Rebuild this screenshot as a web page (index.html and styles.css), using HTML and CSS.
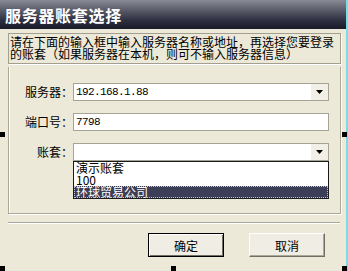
FILE: index.html
```html
<!DOCTYPE html>
<html lang="zh-CN">
<head>
<meta charset="utf-8">
<title>服务器账套选择</title>
<link rel="stylesheet" href="styles.css">
</head>
<body>
<div class="window">
  <div class="titlebar"><span class="title">服务器账套选择</span></div>
  <div class="content">
    <div class="info">请在下面的输入框中输入服务器名称或地址，再选择您要登录<br>的账套（如果服务器在本机，则可不输入服务器信息）</div>
    <div class="group">
      <div class="row">
        <label class="lbl">服务器：</label>
        <div class="combo"><span class="val">192.168.1.88</span><span class="drop"><svg width="7" height="4" viewBox="0 0 7 4"><polygon points="0,0 7,0 3.5,4" fill="#000"/></svg></span></div>
      </div>
      <div class="row">
        <label class="lbl">端口号：</label>
        <div class="field"><span class="val">7798</span></div>
      </div>
      <div class="row">
        <label class="lbl">账套：</label>
        <div class="combo"><span class="val"></span><span class="drop"><svg width="7" height="4" viewBox="0 0 7 4"><polygon points="0,0 7,0 3.5,4" fill="#000"/></svg></span>
          <ul class="list">
            <li>演示账套</li>
            <li>100</li>
            <li class="sel">环球贸易公司</li>
          </ul>
        </div>
      </div>
    </div>
    <div class="sep"></div>
    <div class="buttons">
      <button class="btn default">确定</button>
      <button class="btn">取消</button>
    </div>
  </div>
  <span class="handle h-ml"></span>
  <span class="handle h-mr"></span>
  <span class="handle h-bl"></span>
  <span class="handle h-bm"></span>
  <span class="handle h-br"></span>
</div>
</body>
</html>
```
FILE: styles.css
```css
html, body {
  margin: 0;
  padding: 0;
}
body {
  width: 348px;
  height: 271px;
  overflow: hidden;
  background: #ece9d8;
  font-family: "Noto Sans CJK SC", sans-serif;
  font-size: 12px;
  color: #000;
}
.window {
  position: relative;
  width: 348px;
  height: 271px;
  box-sizing: border-box;
  border-right: 2px solid #7adde6;
}
.titlebar {
  height: 29px;
  display: flex;
  align-items: center;
  padding-left: 5px;
  background: linear-gradient(to bottom, #8a8b97 0%, #61626f 30%, #2e3041 70%, #181a28 100%);
}
.title {
  color: #fff;
  font-weight: bold;
  font-size: 16px;
  line-height: 16px;
  letter-spacing: 0.7px;
  padding-top: 1px;
}
.content {
  padding: 4px 0 0 8px;
}
.info {
  width: 333px;
  height: 31px;
  box-sizing: border-box;
  border: 1px solid #a29f90;
  box-shadow: 1px 1px 0 #fff;
  padding: 2px 0 0 1px;
  line-height: 12px;
  white-space: nowrap;
}
.group {
  margin-top: 3px;
  width: 333px;
  height: 147px;
  box-sizing: border-box;
  border: 1px solid #aca899;
  border-top: 0;
  box-shadow: inset 1px 0 0 #fff, 1px 1px 0 #fff;
  padding-top: 16px;
  display: flex;
  flex-direction: column;
  gap: 12px;
}
.row {
  display: flex;
  align-items: center;
  height: 18px;
}
.lbl {
  flex: none;
  width: 64px;
  text-align: right;
  line-height: 18px;
}
.combo, .field {
  position: relative;
  width: 256px;
  height: 18px;
  box-sizing: border-box;
  background: #fff;
  border: 1px solid #a5a393;
}
.val {
  display: block;
  font-family: "Liberation Mono", monospace;
  font-size: 11px;
  letter-spacing: -0.6px;
  line-height: 16px;
  padding-left: 2px;
  height: 16px;
}
.drop {
  position: absolute;
  right: 0;
  top: 0;
  width: 17px;
  height: 16px;
  background: #f1efe6;
  display: flex;
  align-items: center;
  justify-content: center;
}
.list {
  position: absolute;
  left: -1px;
  top: 17px;
  width: 256px;
  height: 38px;
  box-sizing: border-box;
  margin: 0;
  padding: 0;
  list-style: none;
  background: #fff;
  border: 1px solid #1a1a1a;
  z-index: 2;
}
.list li {
  height: 12px;
  line-height: 12px;
  padding-left: 2px;
  white-space: nowrap;
}
.list li.sel {
  background: #3b3e56;
  color: #fff;
  outline: 1px dotted #c8c8c8;
  outline-offset: -1px;
}
.sep {
  width: 332px;
  height: 0;
  margin-top: 8px;
  border-top: 1px solid #aca899;
  border-bottom: 1px solid #fff;
}
.buttons {
  display: flex;
  gap: 25px;
  padding-left: 140px;
  margin-top: 9px;
}
.btn {
  width: 76px;
  height: 24px;
  box-sizing: border-box;
  padding: 0;
  margin: 0;
  font: inherit;
  color: #000;
  background: #f0eee4;
  border: 1px solid;
  border-color: #fff #716f64 #716f64 #fff;
  box-shadow: inset -1px -1px 0 #aca899;
}
.btn.default {
  border: 1px solid #000;
  box-shadow: inset 1px 1px 0 #fff, inset -1px -1px 0 #716f64;
}
.handle {
  position: absolute;
  width: 5px;
  height: 5px;
  background: #000;
}
.h-ml { left: 0; top: 132px; }
.h-mr { left: 342px; top: 132px; }
.h-bl { left: 0; top: 266px; }
.h-bm { left: 171px; top: 266px; }
.h-br { left: 342px; top: 266px; }
```
